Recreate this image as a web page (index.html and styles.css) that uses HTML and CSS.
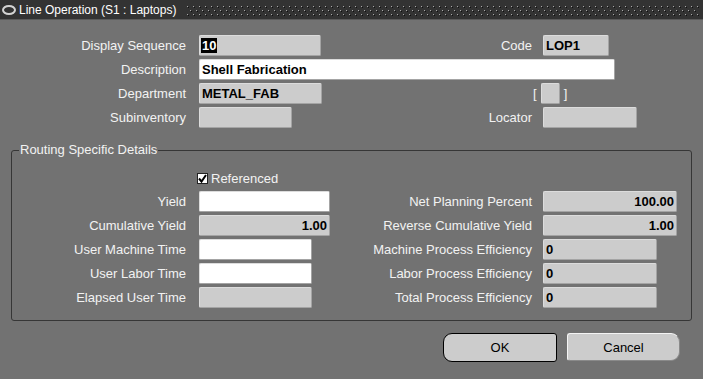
FILE: index.html
```html
<!DOCTYPE html>
<html lang="en">
<head>
    <meta charset="UTF-8">
    <title>Line Operation (S1 : Laptops)</title>
    <link rel="stylesheet" href="styles.css">
</head>
<body>
    <div class="titlebar">
        <svg class="title-icon" width="16" height="12" viewBox="0 0 16 12">
            <ellipse cx="8" cy="6" rx="6" ry="4" fill="none" stroke="#d4d4d4" stroke-width="2"/>
        </svg>
        <span class="title-text">Line Operation (S1 : Laptops)</span>
        <svg class="title-dots" height="12">
            <defs>
                <pattern id="dots" width="6" height="8" patternUnits="userSpaceOnUse">
                    <rect x="0" y="2" width="1" height="1" fill="#a8a8a8"/>
                    <rect x="1" y="3" width="1" height="1" fill="#111"/>
                    <rect x="3" y="6" width="1" height="1" fill="#a8a8a8"/>
                    <rect x="4" y="7" width="1" height="1" fill="#111"/>
                </pattern>
            </defs>
            <rect x="0" y="0" width="100%" height="12" fill="url(#dots)"/>
        </svg>
    </div>

    <div class="main-grid">
        <label class="lbl">Display Sequence</label>
        <div class="field grey w122"><span class="sel">10</span></div>
        <label class="lbl lbl-right">Code</label>
        <div class="field grey w66">LOP1</div>

        <label class="lbl">Description</label>
        <div class="field white wide">Shell Fabrication</div>

        <label class="lbl">Department</label>
        <div class="field grey w123">METAL_FAB</div>
        <div class="bracket-cell">
            <span class="bracket">[</span>
            <div class="field grey w19"></div>
            <span class="bracket">]</span>
        </div>

        <label class="lbl">Subinventory</label>
        <div class="field grey w93"></div>
        <label class="lbl lbl-right">Locator</label>
        <div class="field grey w94"></div>
    </div>

    <fieldset class="group">
        <legend>Routing Specific Details</legend>
        <div class="check-row">
            <span class="checkbox">
                <svg width="11" height="11" viewBox="0 0 11 11">
                    <rect x="0.5" y="0.5" width="10" height="10" fill="#fff" stroke="#222"/>
                    <path d="M2 5.5 L4.5 8.5 L9 2" fill="none" stroke="#000" stroke-width="2"/>
                </svg>
            </span>
            <span class="check-text">Referenced</span>
        </div>
        <div class="group-grid">
            <label class="lbl">Yield</label>
            <div class="field white w131"></div>
            <label class="lbl lbl-right">Net Planning Percent</label>
            <div class="field grey w134 num">100.00</div>

            <label class="lbl">Cumulative Yield</label>
            <div class="field grey w131 num">1.00</div>
            <label class="lbl lbl-right">Reverse Cumulative Yield</label>
            <div class="field grey w134 num">1.00</div>

            <label class="lbl">User Machine Time</label>
            <div class="field white w113"></div>
            <label class="lbl lbl-right">Machine Process Efficiency</label>
            <div class="field grey w114">0</div>

            <label class="lbl">User Labor Time</label>
            <div class="field white w113"></div>
            <label class="lbl lbl-right">Labor Process Efficiency</label>
            <div class="field grey w114">0</div>

            <label class="lbl">Elapsed User Time</label>
            <div class="field grey w113"></div>
            <label class="lbl lbl-right">Total Process Efficiency</label>
            <div class="field grey w114">0</div>
        </div>
    </fieldset>

    <div class="buttons">
        <button class="btn btn-ok">OK</button>
        <button class="btn btn-cancel">Cancel</button>
    </div>
</body>
</html>
```

FILE: styles.css
```css
body {
    margin: 0;
    background: #727272;
    font-family: "Liberation Sans", Arial, sans-serif;
    font-size: 13px;
    color: #f2f2f2;
    width: 703px;
    height: 379px;
    overflow: hidden;
}

.titlebar {
    display: flex;
    align-items: center;
    height: 20px;
    background: #333;
    border-bottom: 1px solid #5a5a5a;
    box-sizing: border-box;
}

.title-icon {
    margin-left: 1px;
    flex: none;
}

.title-text {
    margin-left: 2px;
    font-size: 12px;
    color: #fff;
    white-space: nowrap;
}

.title-dots {
    flex: 1;
    margin-left: 11px;
    margin-right: 3px;
}

.main-grid {
    display: grid;
    grid-template-columns: 199px 150px 194px 1fr;
    grid-auto-rows: 21px;
    row-gap: 3px;
    margin-top: 15px;
}

.lbl {
    display: flex;
    align-items: center;
    justify-content: flex-end;
    padding-right: 13px;
    white-space: nowrap;
}

.lbl-right {
    padding-right: 11px;
}

.field {
    box-sizing: border-box;
    height: 21px;
    line-height: 19px;
    padding: 0 2px;
    font-weight: bold;
    color: #000;
    border: 1px solid;
    border-color: #dcdcdc #a4a4a4 #a4a4a4 #dcdcdc;
    border-radius: 2px;
    white-space: nowrap;
}

.grey {
    background: #cccccc;
}

.white {
    background: #fff;
}

.num {
    text-align: right;
}

.sel {
    background: #000;
    color: #fff;
    padding: 0 1px;
    margin-left: -1px;
}

.wide {
    grid-column: 2 / 5;
    width: 416px;
}

.w19 { width: 19px; }
.w66 { width: 66px; }
.w93 { width: 93px; }
.w94 { width: 94px; }
.w113 { width: 113px; }
.w114 { width: 114px; }
.w122 { width: 122px; }
.w123 { width: 123px; }
.w131 { width: 131px; }
.w134 { width: 134px; }

.bracket-cell {
    grid-column: 3 / 5;
    display: flex;
    align-items: center;
    padding-left: 184px;
}

.bracket {
    padding: 0 4px 0 0;
}

.bracket + .field {
    margin-right: 4px;
}

.group {
    margin: 14px 11px 0 11px;
    padding: 0;
    border: 1px solid #363636;
    border-radius: 3px;
    min-width: 0;
    height: 179px;
    box-sizing: border-box;
}

.group legend {
    margin-left: 7px;
    padding: 0 1px;
    line-height: 16px;
}

.check-row {
    display: flex;
    align-items: center;
    margin-top: 14px;
    padding-left: 185px;
    height: 12px;
}

.checkbox {
    display: flex;
}

.check-text {
    margin-left: 3px;
}

.group-grid {
    display: grid;
    grid-template-columns: 187px 180px 164px 1fr;
    grid-auto-rows: 21px;
    row-gap: 3px;
    margin-top: 7px;
}

.group-grid .lbl-right {
    padding-right: 11px;
}

.buttons {
    display: flex;
    justify-content: flex-end;
    gap: 10px;
    padding-right: 23px;
    margin-top: 12px;
}

.btn {
    font-family: "Liberation Sans", Arial, sans-serif;
    font-size: 13px;
    color: #000;
    background: #cccccc;
    width: 114px;
    height: 28px;
    padding: 0;
}

.btn-ok {
    border: 1px solid #000;
    border-radius: 9px 3px 3px 9px;
    height: 29px;
}

.btn-cancel {
    width: 113px;
    border: 1px solid;
    border-color: #f4f4f4 #8a8a8a #8a8a8a #f4f4f4;
    border-radius: 3px 9px 9px 3px;
}
```
